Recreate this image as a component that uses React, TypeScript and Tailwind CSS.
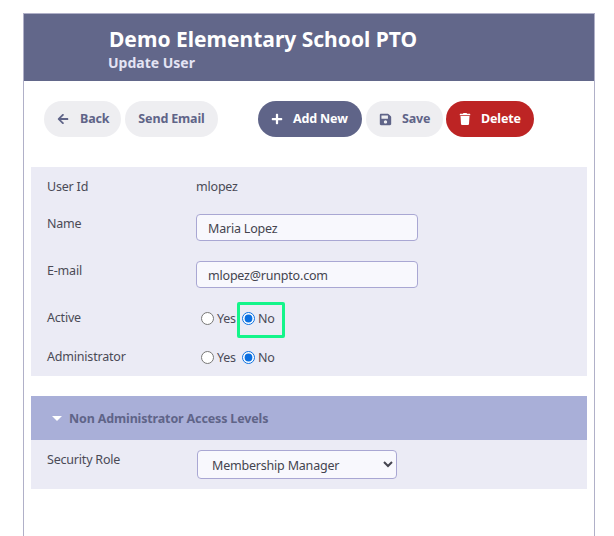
import { FaArrowLeft, FaPlus, FaSave, FaTrash } from 'react-icons/fa'
import type { ReactNode } from 'react'

const pill = 'flex h-9 items-center rounded-full text-[12.5px] font-bold tracking-[-0.15px]'
const greyPill = `${pill} bg-[#eeeef1] text-[#5f6488]`
const bodyText = 'text-[12.5px] leading-[18px] tracking-[-0.2px] text-[#4a4a55]'

function Row({ label, className, children }: { label: string; className: string; children: ReactNode }) {
  return (
    <div className={`flex ${className}`}>
      <div className={`mt-[1px] w-[149px] shrink-0 ${bodyText}`}>{label}</div>
      {children}
    </div>
  )
}

function TextBox({ value }: { value: string }) {
  return (
    <input
      readOnly
      value={value}
      className="h-[27px] w-[222px] rounded-[4px] border border-[#a9a7d3] bg-[#f8f8fd] px-[11px] pt-[2px] text-[12.5px] tracking-[-0.2px] text-[#44444f] outline-none"
    />
  )
}

function Radios({ name, highlight }: { name: string; highlight?: boolean }) {
  return (
    <div className={`relative mt-[2px] flex h-[18px] items-center ${bodyText}`}>
      <input type="radio" name={name} readOnly className="mb-[2px] ml-[5px] mr-[3px] h-[13px] w-[13px] accent-[#0b6fe0]" />
      <span>Yes</span>
      <input type="radio" name={name} readOnly checked className="mb-[2px] ml-[6px] mr-[3px] h-[13px] w-[13px] accent-[#0b6fe0]" />
      <span>No</span>
      {highlight && (
        <div className="absolute left-[41px] top-[-8px] h-[36px] w-[48px] rounded-[2px] border-[3px] border-[#14f58a]" />
      )}
    </div>
  )
}

export default function App() {
  return (
    <div className="h-[536px] overflow-hidden bg-white pl-[23px] pr-[19px] pt-[13px] font-['Noto_Sans','Open_Sans',sans-serif]">
      <div className="h-[523px] border-x border-t border-[#b0b0c8]">
        {/* Header */}
        <div className="h-[67px] bg-[#62678a] pl-[85px] pt-[10px]">
          <div className="text-[21px] font-bold leading-[30px] text-white">Demo Elementary School PTO</div>
          <div className="-ml-[1px] text-[14px] font-bold leading-[18px] text-[#e4e4f4]">Update User</div>
        </div>

        {/* Toolbar */}
        <div className="flex pl-[20px] pt-[20px]">
          <button className={`${greyPill} w-[77px] pl-[13px]`}>
            <FaArrowLeft size={12} />
            <span className="ml-[11px] mt-[1px]">Back</span>
          </button>
          <button className={`${greyPill} ml-[4px] w-[93px] justify-center`}>
            <span className="mt-[1px]">Send Email</span>
          </button>
          <button className={`${pill} ml-[40px] w-[104px] bg-[#5f6488] pl-[13px] text-white`}>
            <FaPlus size={12} />
            <span className="ml-[10px] mt-[1px]">Add New</span>
          </button>
          <button className={`${greyPill} ml-[4px] w-[77px] pl-[13px]`}>
            <FaSave size={13} />
            <span className="ml-[10px] mt-[1px]">Save</span>
          </button>
          <button className={`${pill} ml-[3px] w-[88px] bg-[#bd2424] pl-[13px] text-white`}>
            <FaTrash size={12} />
            <span className="ml-[10px] mt-[1px]">Delete</span>
          </button>
        </div>

        {/* Main fields */}
        <div className="mx-[7px] mt-[30px] h-[209px] bg-[#ebebf5] pl-[16px] pt-[10px]">
          <Row label="User Id" className="h-[37px]">
            <span className={`mt-[1px] ${bodyText}`}>mlopez</span>
          </Row>
          <Row label="Name" className="h-[47px]">
            <TextBox value="Maria Lopez" />
          </Row>
          <Row label="E-mail" className="h-[47px]">
            <TextBox value="mlopez@runpto.com" />
          </Row>
          <Row label="Active" className="h-[39px]">
            <Radios name="active" highlight />
          </Row>
          <Row label="Administrator" className="h-[20px]">
            <Radios name="admin" />
          </Row>
        </div>

        {/* Access levels */}
        <div className="mx-[7px] mt-[20px] flex h-[44px] items-center bg-[#a9afd8] pl-[21px] text-[12.5px] font-bold tracking-[-0.15px] text-[#5f6488]">
          <span className="h-0 w-0 border-x-[5.5px] border-t-[5px] border-x-transparent border-t-white" />
          <span className="ml-[7px] mt-[2px]">Non Administrator Access Levels</span>
        </div>
        <div className="mx-[7px] flex h-[49px] bg-[#ebebf5] pl-[16px] pt-[10px]">
          <div className={`mt-[1px] w-[150px] shrink-0 ${bodyText}`}>Security Role</div>
          <select className="h-[29px] w-[200px] rounded-[4px] border border-[#a9a7d3] bg-[#f8f8fd] pl-[10px] pt-[2px] text-[12.5px] tracking-[-0.2px] text-[#44444f] outline-none">
            <option>Membership Manager</option>
          </select>
        </div>
      </div>
    </div>
  )
}
